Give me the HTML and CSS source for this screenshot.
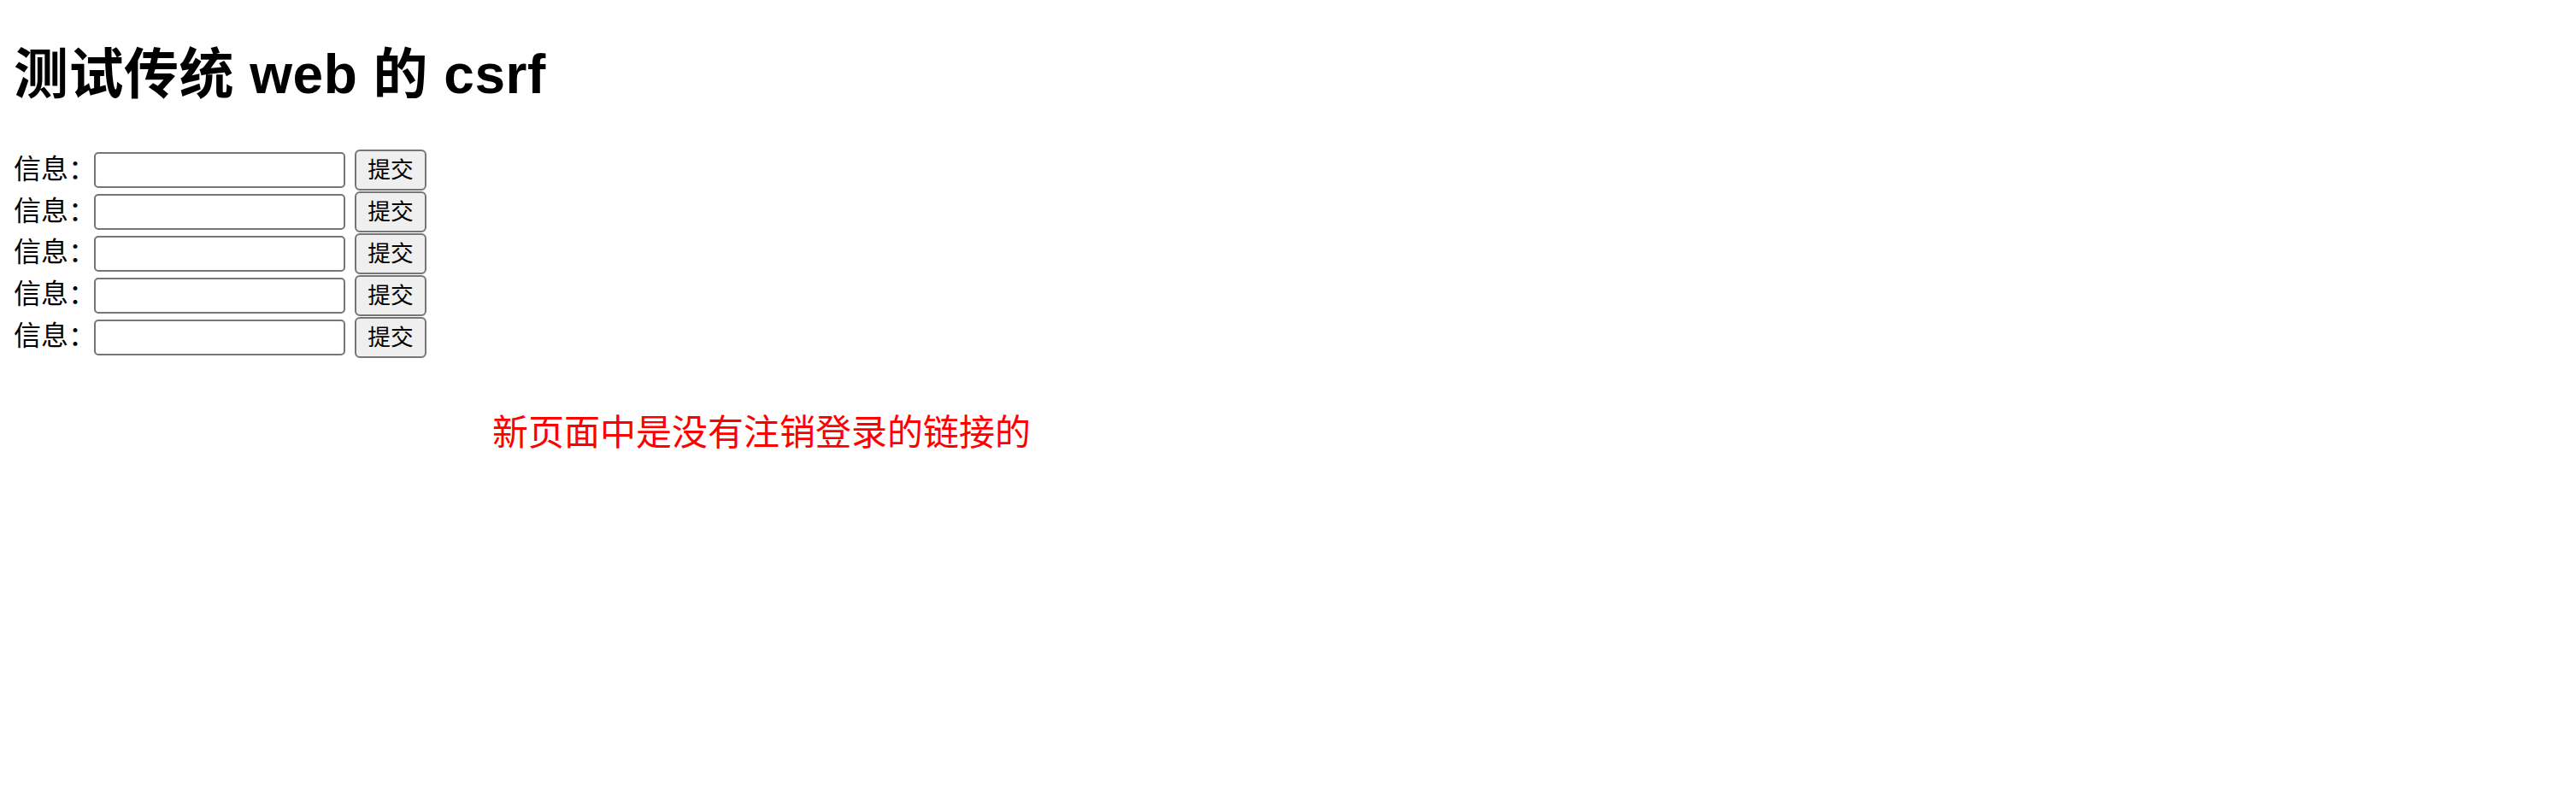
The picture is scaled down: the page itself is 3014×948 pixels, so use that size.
FILE: index.html
```html
<!DOCTYPE html>
<html lang="zh-CN">
<head>
<meta charset="utf-8">
<title>测试传统 web 的 csrf</title>
<link rel="stylesheet" href="styles.css">
</head>
<body>
<h1 class="title">测试传统 web 的 csrf</h1>
<div class="forms">
  <form class="row"><label class="label">信息：</label><input class="field" type="text" name="msg"><button class="submit" type="button">提交</button></form>
  <form class="row"><label class="label">信息：</label><input class="field" type="text" name="msg"><button class="submit" type="button">提交</button></form>
  <form class="row"><label class="label">信息：</label><input class="field" type="text" name="msg"><button class="submit" type="button">提交</button></form>
  <form class="row"><label class="label">信息：</label><input class="field" type="text" name="msg"><button class="submit" type="button">提交</button></form>
  <form class="row"><label class="label">信息：</label><input class="field" type="text" name="msg"><button class="submit" type="button">提交</button></form>
</div>
<p class="note">新页面中是没有注销登录的链接的</p>
</body>
</html>
```
FILE: styles.css
```css
html, body {
  background: #ffffff;
}
body {
  margin: 16px;
  font-family: "Liberation Sans", "Noto Sans CJK SC", sans-serif;
  color: #000000;
}
.title {
  margin: 32.8px 0 49.4px 0;
  font-size: 64px;
  line-height: 76.8px;
  font-weight: 700;
  letter-spacing: 0.5px;
}
.forms {
  display: flex;
  flex-direction: column;
}
.row {
  display: flex;
  align-items: center;
  height: 48.8px;
  margin: 0;
}
.label {
  font-size: 32px;
  line-height: 40px;
  padding-bottom: 3px;
  width: 94px;
  white-space: nowrap;
}
.field {
  box-sizing: border-box;
  width: 294px;
  height: 42px;
  margin: 0;
  padding: 2px 4px;
  border: 2px solid #767676;
  border-radius: 5px;
  background: #ffffff;
  font-size: 26.7px;
}
.submit {
  box-sizing: border-box;
  width: 84px;
  height: 48px;
  margin: 0 0 0 11px;
  padding: 0;
  border: 2px solid #767676;
  border-radius: 6px;
  background: #efefef;
  color: #000000;
  font-family: "Liberation Sans", "Noto Sans CJK SC", sans-serif;
  font-size: 26.7px;
  line-height: 30px;
}
.note {
  margin: 63px 0 0 560px;
  font-size: 42px;
  line-height: 50px;
  color: #ff0000;
}
```
